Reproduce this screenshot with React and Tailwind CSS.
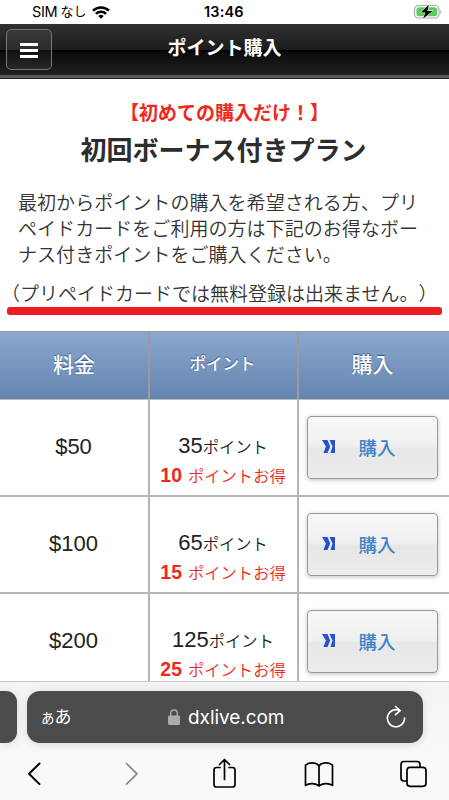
const plans = [
  { price: "$50", points: "35", bonus: "10" },
  { price: "$100", points: "65", bonus: "15" },
  { price: "$200", points: "125", bonus: "25" },
];

function StatusBar() {
  return (
    <div className="relative flex h-6 shrink-0 items-center bg-white pl-8 leading-6 text-black">
      <span className="font-['Inter'] text-[14.5px] tracking-[-0.3px]">SIM</span>
      <span className="ml-[3px] text-[13px]">なし</span>
      <svg viewBox="0 0 18 13" className="ml-[6px] h-[13px] w-[18px]" fill="none" stroke="#000" strokeWidth="2.5">
        <path d="M1 4.7a11.3 11.3 0 0 1 16 0" />
        <path d="M3.9 7.9a7.2 7.2 0 0 1 10.2 0" />
        <path d="M9 12.8 6.3 10a3.8 3.8 0 0 1 5.4 0Z" fill="#000" stroke="none" />
      </svg>
      <span className="absolute left-[204px] top-0 font-['Inter'] text-[14.5px] font-semibold tracking-[0.15px]">13:46</span>
      <svg viewBox="0 0 30 16" className="absolute left-[413px] top-1 h-4 w-[30px]">
        <rect x="1.5" y="1.5" width="24.5" height="12.5" rx="4" fill="none" stroke="#aaa" strokeWidth="1.2" />
        <rect x="3.4" y="3.3" width="20.7" height="9" rx="2.3" fill="#5fca5f" />
        <path d="M27.4 5.7c1.3.4 1.3 3.6 0 4Z" fill="#aaa" />
        <path d="M15.8.8 8 8.6h4.4L10 14.8l9.5-7.9h-5Z" fill="#000" stroke="#fff" strokeWidth="1" paintOrder="stroke" />
      </svg>
    </div>
  );
}

function NavBar() {
  return (
    <header className="relative flex h-[54px] shrink-0 items-start justify-center border-b-[3px] border-b-[#5b5b5b] bg-[linear-gradient(#313131_0%,#1c1c1c_50%,#000_51%,#0d0d0d_58%,#202020_100%)] shadow-[0_1px_0_#222]">
      <h1 className="pt-[11px] text-[19px] font-bold leading-7 text-white">ポイント購入</h1>
      <button className="absolute left-1.5 top-[5px] flex h-[41px] w-[46px] flex-col items-center justify-center gap-[3px] rounded-[5px] border-[1.5px] border-[#777] bg-[linear-gradient(#3a3a3a,#2b2b2b_50%,#101010_52%,#292929)] pt-px">
        <span className="h-[3px] w-[18px] bg-white" />
        <span className="h-[3px] w-[18px] bg-white" />
        <span className="h-[3px] w-[18px] bg-white" />
      </button>
    </header>
  );
}

function Intro() {
  return (
    <section className="h-[253px] shrink-0 text-[#333] [text-spacing-trim:space-all]">
      <p className="pt-[22px] text-center text-[19px] font-bold leading-7 text-[#f0281b]">【初めての購入だけ！】</p>
      <h2 className="mt-[3px] pr-0.5 text-center text-[26px] font-bold leading-10 text-[#2d2d2d]">初回ボーナス付きプラン</h2>
      <p className="ml-[18px] mt-5 text-[19px] font-[350] leading-[26px] tracking-[0.05px]">
        最初からポイントの購入を希望される方、プリ
        <br />
        ペイドカードをご利用の方は下記のお得なボー
        <br />
        ナス付きポイントをご購入ください。
      </p>
      <p className="mt-[13px] whitespace-nowrap pl-px text-[19px] font-[350] leading-[26px]">
        （プリペイドカードでは無料登録は出来ません。）
      </p>
      <div className="-mt-px ml-[7px] h-2 w-[435px] rounded-[3px] bg-[#ed1c24]" />
    </section>
  );
}

function BuyButton() {
  return (
    <button className="relative flex h-[63px] w-[131px] items-center rounded-[4px] border border-[#999] bg-[linear-gradient(#f8f8f8,#efefef_48%,#e7e7e7_52%,#ececec)] pl-[50.5px] shadow-[0_1px_4px_rgba(0,0,0,0.25)]">
      <svg viewBox="0 0 13 13" className="absolute left-[14px] top-[23px] h-[13px] w-[13px]" fill="#2450d2">
        <path d="M0 0h5.500l2.700 6.500L5.500 13H1.500l2.400-6.500Z" />
        <path d="M7.500 0H13v13H8.500l2-6.500Z" />
      </svg>
      <span className="pt-0.5 text-[18.5px] font-medium leading-7 text-[#3b83c8]">購入</span>
    </button>
  );
}

function PriceTable() {
  return (
    <section className="min-h-0 flex-1 overflow-hidden">
      <div className="grid h-[69px] grid-cols-[150px_149px_150px] border-t border-b border-t-[#9a9a91] border-b-[#bbb] bg-[linear-gradient(#8aa8cf,#6485b0)] font-medium text-white [text-shadow:0_-1px_1px_#345780]">
        <div className="flex items-center justify-center border-r-2 border-[#9b9b9b] pb-0.5 text-[21px]">料金</div>
        <div className="flex items-center justify-center border-r-2 border-[#9b9b9b] pb-0.5 pr-0.5 text-[16.5px]">ポイント</div>
        <div className="flex items-center justify-center pb-0.5 pr-[3px] text-[21px]">購入</div>
      </div>
      {plans.map((plan) => (
        <div key={plan.price} className="grid h-[97px] grid-cols-[150px_149px_150px] border-b-2 border-[#b5b5b5] text-[#222]">
          <div className="flex items-center justify-center border-r-2 border-[#b5b5b5] pb-0.5 pr-px text-[22px]">{plan.price}</div>
          <div className="flex flex-col items-center whitespace-nowrap border-r-2 border-[#b5b5b5] pr-px pt-[31px]">
            <p className="text-[22px] leading-[29px]">
              {plan.points}
              <span className="text-[16.3px] font-[350]">ポイント</span>
            </p>
            <p className="-mt-px text-[16.3px] font-[350] leading-[29px] text-[#f0281b]">
              <b className="mr-[6px] text-[19.5px] font-bold">{plan.bonus}</b>
              ポイントお得
            </p>
          </div>
          <div className="pl-2 pt-4">
            <BuyButton />
          </div>
        </div>
      ))}
    </section>
  );
}

function BrowserBar() {
  return (
    <footer className="h-[119px] shrink-0 overflow-hidden border-t border-[#ccc] bg-[linear-gradient(#f3f3f3,#faf9f9_60%)] pt-[9px]">
      <div className="flex h-[52px] gap-[10px]">
        <div className="w-[17px] rounded-r-[11px] bg-[#4b4b4b] shadow-[0_2px_10px_rgba(0,0,0,0.12)]" />
        <div className="flex w-[396px] items-center rounded-[13px] bg-[#4b4b4b] text-white shadow-[0_2px_10px_rgba(0,0,0,0.12)]">
          <span className="ml-[14px] w-[127px] pt-0.5 text-[17px]">
            <span className="text-[13.5px]">あ</span>あ
          </span>
          <svg viewBox="0 0 12 16" className="h-4 w-3" fill="#aaaab0">
            <rect y="6.5" width="12" height="9.5" rx="1.5" />
            <path d="M2.7 7V4.3a3.3 3.3 0 0 1 6.6 0V7" fill="none" stroke="#aaaab0" strokeWidth="1.4" />
          </svg>
          <span className="ml-2 pt-0.5 font-['Inter'] text-[19px] tracking-[-0.05px]">dxlive.com</span>
          <svg viewBox="0 0 20 24" className="ml-auto mr-[17px] h-6 w-5" fill="none" stroke="#fff" strokeWidth="1.6" strokeLinecap="round" strokeLinejoin="round">
            <path d="M14 5.6a8.600 8.600 0 1 0 4.600 7.400" />
            <path d="m9.500 1.500 4.500 4.100-4.500 4.100" />
          </svg>
        </div>
      </div>
      <svg viewBox="0 0 449 57" className="h-[57px] w-[449px]" fill="none" stroke="#000" strokeWidth="1.7" strokeLinecap="round" strokeLinejoin="round">
        <path d="M39.5 20.500 29 30.800l10.500 10.300" strokeWidth="2" />
        <path d="m126.500 20.500 10.500 10.300-10.500 10.300" stroke="#888" />
        <path d="M220 24.500h-3.500a2.500 2.500 0 0 0-2.500 2.500v14.500a2.500 2.500 0 0 0 2.500 2.500h16a2.500 2.500 0 0 0 2.500-2.500V27a2.500 2.500 0 0 0-2.500-2.500H229M224.500 36.500V16.700M219.500 21.500l5-5 5 5" />
        <path d="M319 23c-2-3.500-9.500-4.500-13.500-.8v20.200c4-2.700 10.500-2.200 13.500.6 3-2.800 9.500-3.300 13.500-.6V22.200c-4-3.700-11.500-2.700-13.500.8Zm0 0v20" />
        <path d="M406.500 38h-2.500a3 3 0 0 1-3-3V21.500a3 3 0 0 1 3-3h13a3 3 0 0 1 3 3V24" />
        <rect x="407" y="24.300" width="19" height="19" rx="3" />
      </svg>
    </footer>
  );
}

export default function App() {
  return (
    <main className="flex h-[800px] w-[449px] flex-col overflow-hidden bg-white font-['Liberation_Sans','Noto_Sans_CJK_JP',sans-serif]">
      <StatusBar />
      <NavBar />
      <Intro />
      <PriceTable />
      <BrowserBar />
    </main>
  );
}
